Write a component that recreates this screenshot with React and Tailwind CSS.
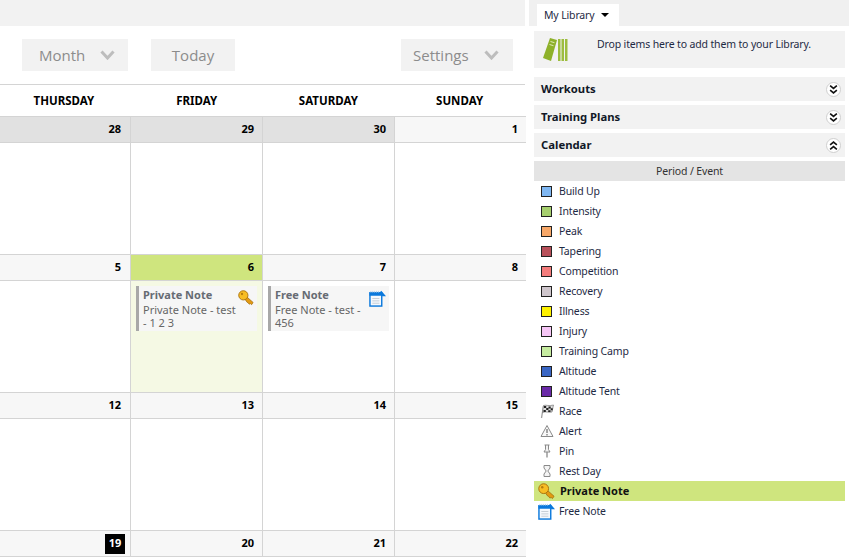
import React from "react";

function Key({ className }) {
  return (
    <svg viewBox="0 0 18 18" className={className}>
      <path d="M6.500 8.500 L8.500 6.500 L17 14 L15.300 16.500 L13.800 15.200 L12.600 16 L11.300 14.300 L10.200 13.800 Z" fill="#e39a12" stroke="#a06a08" strokeWidth="0.8" />
      <circle cx="6" cy="6" r="5.200" fill="#f7bd24" stroke="#a8700c" strokeWidth="1" />
      <circle cx="4.500" cy="4.500" r="1.300" fill="#b67c10" />
    </svg>
  );
}

function Note({ className }) {
  return (
    <svg viewBox="0 0 18 18" className={className}>
      <rect x="1" y="3" width="12.500" height="14" fill="#f4f8fd" stroke="#0a78dc" strokeWidth="1.500" />
      <path d="M0.500 2.500 H11.500 L13 0.800 L18 6.500 H14 V6 H0.500 Z" fill="#0a78dc" />
      <path d="M2 1 V3 M4 1 V3 M6 1 V3 M8 1 V3 M10 1 V3" stroke="#9cc4ea" strokeWidth="0.800" />
      <path d="M3.500 9 H11 M3.500 11.500 H11 M3.500 14 H11" stroke="#c4ccd4" strokeWidth="1" />
    </svg>
  );
}

function Flag() {
  return (
    <svg viewBox="0 0 14 14" className="w-[14px] h-[14px]">
      <path d="M1.500 14 L3.500 2" stroke="#a0a0a0" strokeWidth="1.300" />
      <path d="M3.500 1.500 C6 0.500 9 2.500 13.500 1 L12 8 C8.500 9 6.500 7 2.500 8.500 Z" fill="#dedede" stroke="#666" strokeWidth="0.600" />
      <path d="M4 2h2.200v2H4zM8.500 2.500h2.200v2H8.500zM6.200 4h2.200v2H6.200zM10.700 4.300h2v2h-2zM3.500 6h2.300v2H3.500zM8.200 6.200h2.300v1.800H8.200z" fill="#222" />
    </svg>
  );
}
function Alert() {
  return (
    <svg viewBox="0 0 14 14" className="w-[14px] h-[14px]">
      <path d="M7 1.500 L13 12.500 H1 Z" fill="#f8f8f8" stroke="#8a8a8a" strokeWidth="1" strokeLinejoin="round" />
      <path d="M7 5 V9 M7 10 V11.500" stroke="#777" strokeWidth="1.300" />
    </svg>
  );
}
function Pin() {
  return (
    <svg viewBox="0 0 10 14" className="w-[10px] h-[14px]">
      <path d="M2.500 1 H7.500 M3.500 1 V5.500 L2 8 H8 L6.500 5.500 V1" fill="#f2f2f2" stroke="#8a8a8a" strokeWidth="1" />
      <path d="M5 8 V13.500" stroke="#8a8a8a" strokeWidth="1.300" />
    </svg>
  );
}
function Hourglass() {
  return (
    <svg viewBox="0 0 8 12" className="w-[8px] h-[12px]">
      <path d="M1 0.500 H7 V3 L4.800 6 L7 9 V11.500 H1 V9 L3.200 6 L1 3 Z" fill="#f4f4f4" stroke="#8a8a8a" strokeWidth="1" />
    </svg>
  );
}
function Books() {
  return (
    <svg viewBox="0 0 26 24" className="w-[26px] h-[24px]">
      <path d="M7 0 L14 2 L8 23 L0 20 Z" fill="#8eb12a" />
      <path d="M7.500 3.500 L11.500 4.700 M6.500 6.500 L10.500 7.700" stroke="#dfe9b8" strokeWidth="1" />
      <rect x="15" y="1" width="2.500" height="22" fill="#9dbd3e" />
      <rect x="18.500" y="1" width="2.500" height="22" fill="#9dbd3e" />
      <rect x="22" y="1" width="2.500" height="22" fill="#9dbd3e" />
    </svg>
  );
}
function Chevron() {
  return (
    <svg viewBox="0 0 15 10" className="w-[15px] h-[10px]">
      <path d="M1.500 1.500 L7.500 8 L13.500 1.500" fill="none" stroke="#bdbdbd" strokeWidth="3" />
    </svg>
  );
}
function Collapse({ up }) {
  return (
    <span className="w-[15px] h-[15px] rounded-full bg-white border border-[#cfcfcf] flex items-center justify-center">
      <svg viewBox="0 0 8 8" className={up ? "w-[9px] h-[9px] rotate-180" : "w-[9px] h-[9px]"}>
        <path d="M1 0.500 L4 3 L7 0.500 M1 4.500 L4 7 L7 4.500" fill="none" stroke="#111" strokeWidth="1.400" />
      </svg>
    </span>
  );
}

function ToolButton({ label, className, chevron }) {
  return (
    <div className={`h-[32px] bg-[#f2f2f2] flex items-center text-[#8c8c8c] text-[15px] [font-family:'Open_Sans',sans-serif] ${className}`}>
      <span>{label}</span>
      {chevron && <Chevron />}
    </div>
  );
}

const rows = [
  [{ n: 28, prev: true }, { n: 29, prev: true }, { n: 30, prev: true }, { n: 1 }],
  [{ n: 5 }, { n: 6, today: true }, { n: 7, free: true }, { n: 8 }],
  [{ n: 12 }, { n: 13 }, { n: 14 }, { n: 15 }],
  [{ n: 19, mark: true }, { n: 20 }, { n: 21 }, { n: 22 }],
];
const days = ["THURSDAY", "FRIDAY", "SATURDAY", "SUNDAY"];
const colW = ["w-[131px]", "w-[132px]", "w-[132px]", "w-[131px]"];

function NoteCard({ title, body, icon }) {
  return (
    <div className="relative mt-[5px] ml-[5px] w-[121px] h-[45px] bg-[#f6f6f6] border-l-[3px] border-[#a8a8a8] pl-[4px] pt-[2px] text-[11px] leading-[13px] text-[#666666]">
      <div className="font-bold text-[#666b73]">{title}</div>
      <div className="mt-[2px] w-[97px]">{body}</div>
      <div className="absolute right-[3px] top-[4px]">{icon}</div>
    </div>
  );
}

function Row({ row, last }) {
  return (
    <>
      <div className="flex">
        {row.map((c, i) => (
          <div
            key={i}
            className={`${colW[i]} h-[27px] border-t border-b border-[#d4d4d4] ${i < 3 ? "border-r" : ""} ${i === 0 ? "pr-[9px]" : "pr-[8px]"} flex items-center justify-end text-[11px] font-bold text-black ${c.prev ? "bg-[#e1e1e1]" : c.today ? "bg-[#cfe57e]" : "bg-[#f7f7f7]"}`}
          >
            {c.mark ? (
              <span className="w-[20px] h-[20px] -mr-[4px] bg-black text-white flex items-center justify-center">{c.n}</span>
            ) : (
              c.n
            )}
          </div>
        ))}
      </div>
      {!last && (
        <div className="flex">
          {row.map((c, i) => (
            <div key={i} className={`${colW[i]} h-[111px] ${i < 3 ? "border-r border-[#d4d4d4]" : ""} ${c.today ? "bg-[#f5f9e4]" : ""}`}>
              {c.today && <NoteCard title="Private Note" body="Private Note - test - 1 2 3" icon={<Key className="w-[16px] h-[16px]" />} />}
              {c.free && <NoteCard title="Free Note" body="Free Note - test - 456" icon={<Note className="w-[17px] h-[17px]" />} />}
            </div>
          ))}
        </div>
      )}
    </>
  );
}

const swatches = [
  ["Build Up", "#7fb7f2"],
  ["Intensity", "#a6cf6e"],
  ["Peak", "#f7a768"],
  ["Tapering", "#b8505a"],
  ["Competition", "#f47c7c"],
  ["Recovery", "#cfc6cc"],
  ["Illness", "#fff200"],
  ["Injury", "#f6c6f6"],
  ["Training Camp", "#c6eca0"],
  ["Altitude", "#3a66c4"],
  ["Altitude Tent", "#6a2aa8"],
];
const iconRows = [
  ["Race", <Flag />],
  ["Alert", <Alert />],
  ["Pin", <Pin />],
  ["Rest Day", <Hourglass />],
];

function ListRow({ icon, label, active }) {
  return (
    <div className={`h-[20px] flex items-center ${active ? "bg-[#cfe57e] font-bold text-[11px] tracking-normal text-[#111]" : ""}`}>
      <span className="w-[25px] flex justify-center shrink-0">{icon}</span>
      <span className={active ? "pl-px" : "pt-px"}>{label}</span>
    </div>
  );
}

function Accordion({ label, up }) {
  return (
    <div className="h-[24px] bg-[#f2f2f2] flex items-center justify-between pl-[7px] pr-[4px] font-bold text-[11.3px] tracking-normal text-[#111827]">
      <span>{label}</span>
      <Collapse up={up} />
    </div>
  );
}

export default function App() {
  return (
    <div className="w-[849px] h-[557px] overflow-hidden bg-white flex text-[10.5px] tracking-[-0.15px] [font-family:'Noto_Sans',sans-serif]">
      <div className="w-[526px] shrink-0 tracking-normal">
        <div className="h-[26px] bg-[#f2f2f2] mr-px" />
        <div className="h-[58px] flex items-center pl-[22px] pr-[13px]">
          <ToolButton label="Month" className="w-[106px] pl-[17px] gap-[15px]" chevron />
          <div className="w-[23px]" />
          <ToolButton label="Today" className="w-[84px] justify-center" />
          <div className="flex-1" />
          <ToolButton label="Settings" className="w-[112px] pl-[12px] gap-[15px]" chevron />
        </div>
        <div className="flex h-[32px] border-t border-[#d4d4d4] mr-px">
          {days.map((d, i) => (
            <div key={d} className={`${colW[i]} flex items-center justify-center text-[11.5px] font-bold text-black ${i === 0 ? "pr-[3px]" : ""}`}>{d}</div>
          ))}
        </div>
        <div>
          {rows.map((r, i) => (
            <Row key={i} row={r} last={i === 3} />
          ))}
        </div>
      </div>
      <div className="flex-1 min-w-0">
        <div className="h-[26px] bg-[#f0f0f0] ml-[3px] pl-[8px] flex items-end">
          <div className="w-[82px] h-[22px] bg-white flex items-center gap-[6px] pl-[7px] text-[#1e2a44]">
            <span className="pt-px">My Library</span>
            <span className="w-0 h-0 border-x-[4px] border-x-transparent border-t-[4px] border-t-black" />
          </div>
        </div>
        <div className="pl-[8px] pr-[4px]">
          <div className="mt-[5px] h-[37px] bg-[#f2f2f2] flex items-start">
            <span className="ml-[9px] mt-[7px]"><Books /></span>
            <span className="ml-[28px] mt-[6px] text-[#1e2a44]">Drop items here to add them to your Library.</span>
          </div>
          <div className="mt-[9px] flex flex-col gap-[4px]">
            <Accordion label="Workouts" />
            <Accordion label="Training Plans" />
            <Accordion label="Calendar" up />
          </div>
          <div className="mt-[4px] h-[20px] pt-px bg-[#e4e4e4] flex items-center justify-center text-[#333]">Period / Event</div>
          <div className="text-[#1e2a44]">
            {swatches.map(([l, c]) => (
              <ListRow key={l} label={l} icon={<span className="block w-[9px] h-[9px] border border-[#222] box-content" style={{ backgroundColor: c }} />} />
            ))}
            {iconRows.map(([l, ic]) => (
              <ListRow key={l} label={l} icon={ic} />
            ))}
            <ListRow label="Private Note" active icon={<Key className="w-[17px] h-[17px]" />} />
            <ListRow label="Free Note" icon={<Note className="w-[17px] h-[17px]" />} />
          </div>
        </div>
      </div>
    </div>
  );
}
